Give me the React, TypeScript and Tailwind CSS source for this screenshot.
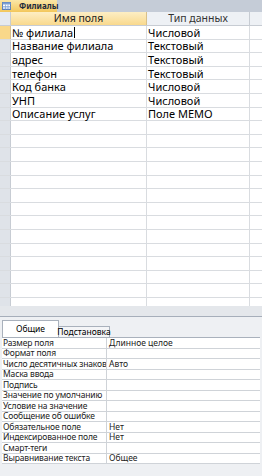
import React from 'react'

type Field = { name: string; type: string }

const fields: Field[] = [
	{ name: '№ филиала', type: 'Числовой' },
	{ name: 'Название филиала', type: 'Текстовый' },
	{ name: 'адрес', type: 'Текстовый' },
	{ name: 'телефон', type: 'Текстовый' },
	{ name: 'Код банка', type: 'Числовой' },
	{ name: 'УНП', type: 'Числовой' },
	{ name: 'Описание услуг', type: 'Поле MEMO' },
]

const props: [string, string][] = [
	['Размер поля', 'Длинное целое'],
	['Формат поля', ''],
	['Число десятичных знаков', 'Авто'],
	['Маска ввода', ''],
	['Подпись', ''],
	['Значение по умолчанию', ''],
	['Условие на значение', ''],
	['Сообщение об ошибке', ''],
	['Обязательное поле', 'Нет'],
	['Индексированное поле', 'Нет'],
	['Смарт-теги', ''],
	['Выравнивание текста', 'Общее'],
]

const rows = Array.from({ length: 21 }, (_, i) => fields[i] ?? { name: '', type: '' })

// small datasheet icon used on the object tab
const TableIcon = () => (
	<svg width="9" height="8" viewBox="0 0 9 8" className="shrink-0">
		<rect x="0.5" y="0.5" width="8" height="7" fill="#fff" stroke="#5b7fb8" />
		<rect x="0.5" y="0.5" width="8" height="2" fill="#7d9fd3" />
		<path d="M0.5 4.5H8.5M0.5 6H8.5M3.5 2.5V7.5M6 2.5V7.5" stroke="#7d9fd3" strokeWidth="0.7" />
	</svg>
)

export default function App() {
	return (
		<div
			className="flex h-[476px] w-[262px] flex-col overflow-hidden bg-white text-black"
			style={{ fontFamily: '"Noto Sans", "Open Sans", sans-serif' }}
		>
			{/* object tab strip */}
			<div className="flex h-[12px] shrink-0 items-stretch bg-[#c5ccd7]">
				<div className="flex w-[57px] items-center gap-[8px] bg-gradient-to-b from-[#fbe6a6] to-[#f3c75a] pl-[2px]">
					<TableIcon />
					<span className="text-[8px] font-bold leading-none text-[#1e2a3c]">Филиалы</span>
				</div>
			</div>

			{/* column headers */}
			<div className="flex h-[14px] shrink-0 border-b border-[#c7ccd3]">
				<div className="w-[11px] border-r border-[#c7ccd3] bg-[#e6eaf0]" />
				<div className="flex w-[136px] items-center justify-center border-r border-[#d8c08a] bg-gradient-to-b from-[#fdeec4] to-[#f9d98c] text-[10.5px] leading-none text-[#222]">
					Имя поля
				</div>
				<div className="flex w-[103px] items-center justify-center border-r border-[#c7ccd3] bg-[#eef1f5] text-[10.5px] leading-none text-[#333]">
					Тип данных
				</div>
				<div className="flex-1 bg-[#eef1f5]" />
			</div>

			{/* design grid */}
			<div className="h-[280px] shrink-0 overflow-hidden">
				{rows.map((row, i) => (
					<div key={i} className="flex h-[13.6px] border-b border-[#d9dce0]">
						<div
							className={
								i === 0
									? 'w-[11px] border-r border-[#d8c08a] bg-[#f9d88a]'
									: 'w-[11px] border-r border-[#c7ccd3] bg-[#dfe3e9]'
							}
						/>
						<div className="flex w-[136px] items-center whitespace-nowrap border-r border-[#d9dce0] pl-[1px] text-[11px] leading-none">
							{row.name}
							{i === 0 && <span className="ml-px inline-block h-[11px] w-px bg-black" />}
						</div>
						<div className="flex w-[103px] items-center whitespace-nowrap border-r border-[#d9dce0] pl-[1px] text-[11px] leading-none">
							{row.type}
						</div>
						<div className="flex-1" />
					</div>
				))}
			</div>

			{/* splitter */}
			<div className="h-[11px] shrink-0 border-b border-[#a6aeba] bg-[#e4e7eb]" />

			{/* field properties */}
			<div className="flex flex-1 flex-col bg-[#eef0f3] px-[2px] pt-[3px]">
				<div className="flex h-[17px] items-end">
					<div className="flex h-[17px] w-[57px] items-center justify-center border border-b-0 border-[#a9b1bc] bg-white text-[8.5px] leading-none">
						Общие
					</div>
					<div className="flex h-[11px] w-[51px] items-center justify-center whitespace-nowrap border border-b-0 border-l-0 border-[#a9b1bc] bg-[#f4f5f7] text-[8.5px] leading-none">
						Подстановка
					</div>
				</div>
				<div className="border-t border-[#a9b1bc] bg-white">
					{props.map(([label, value]) => (
						<div key={label} className="flex h-[10.5px] border-b border-[#cfd3d8]">
							<div className="flex w-[105px] items-center overflow-hidden whitespace-nowrap border-r border-[#cfd3d8] pl-[1px] text-[8.5px] leading-none tracking-[-0.15px] text-[#222]">
								{label}
							</div>
							<div className="flex flex-1 items-center whitespace-nowrap pl-[2px] text-[8.5px] leading-none text-[#222]">
								{value}
							</div>
						</div>
					))}
				</div>
			</div>
		</div>
	)
}
